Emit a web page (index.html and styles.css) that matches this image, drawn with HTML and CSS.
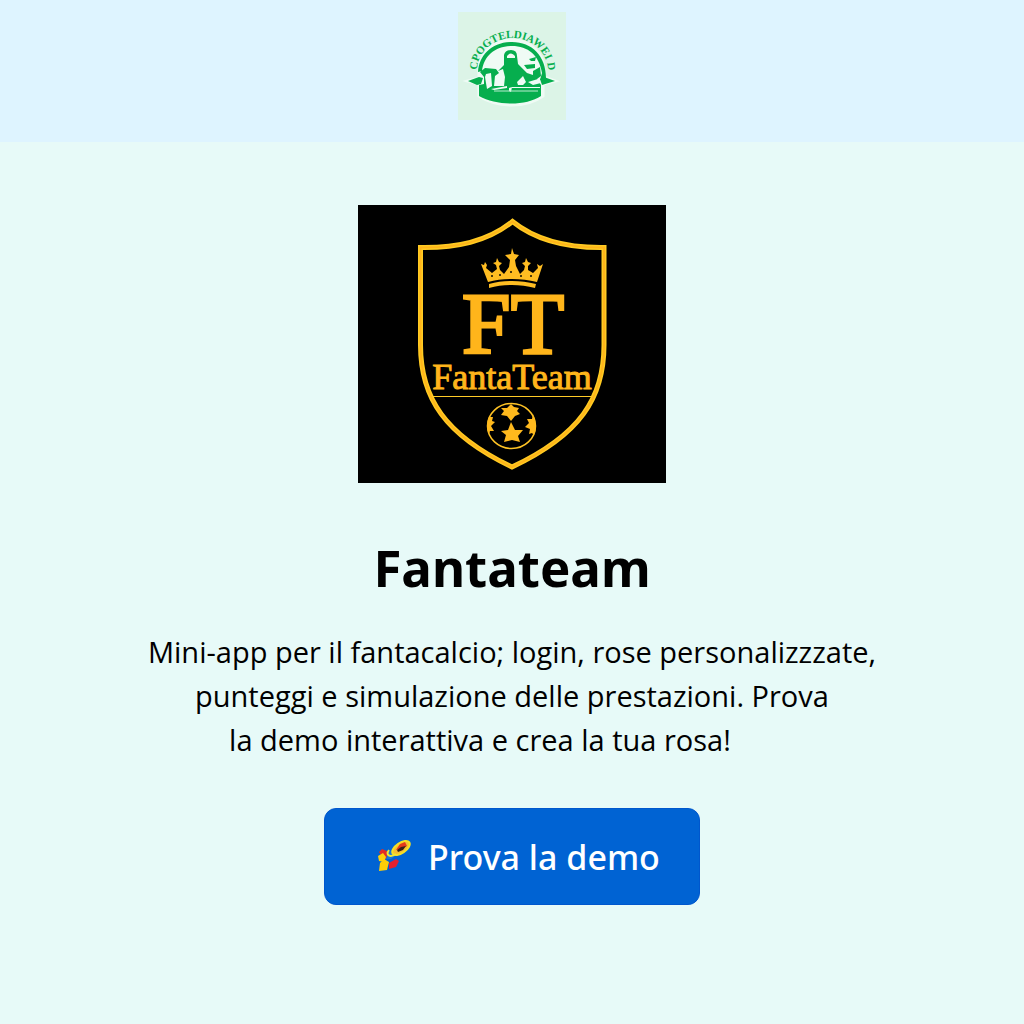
FILE: index.html
```html
<!DOCTYPE html>
<html lang="it">
<head>
<meta charset="utf-8">
<meta name="viewport" content="width=device-width, initial-scale=1">
<title>Fantateam</title>
<link rel="stylesheet" href="styles.css">
</head>
<body>
<header class="site-header">
  <svg class="site-logo" viewBox="0 0 108 108" role="img" aria-label="Logo">
    <rect width="108" height="108" fill="#dcf4e7"/>
    <path d="M54 28C34 28 21 42 21 58V66L10 69L21 72V84C40 96 68 96 85 84V72L97 69L86 65V58C86 42 73 28 54 28Z" fill="#effbf5" stroke="#effbf5" stroke-width="3"/>
    <path id="ring" d="M19 58A35.500 33 0 0 1 90 60" fill="none"/>
    <text class="ring-text"><textPath href="#ring" startOffset="0">CPOGTELDIAWEI D</textPath></text>
    <path d="M54 30C34 30 21 43 20 60L24 59C26 43 38 34 54 34S81 43 84 61L82 68L88 66C88 44 74 30 54 30Z" fill="#06ae4e"/>
    <path d="M10 69L21 65L25 66L23 72L19 73ZM97 69L86 65L82 67L84 73ZM21 73L26 72V65L22 60L27 56L38 57L41 61L37 64L36 74H46L47 65L45 57L40 59L46 53L46 43Q47 38 53 38Q59 38 59 44L60 52L69 61L75 63L75 59L82 55L83 64L79 67L83 73V84C68 94 39 94 21 84Z" fill="#06ae4e"/>
    <path d="M49 44Q53 39 57 44V46H49ZM28 62L33 61L34 74L29 77L27 65ZM33 77L49 74V76L36 78ZM54 75H82V76H54ZM51 76L54 75L53 80L51 79ZM59 70L65 64L68 70L65 73H60ZM70 70L80 67L83 71L75 73Z" fill="#effbf5"/>
    <path d="M71 47L78 45L77 49L73 49ZM66 53L77 52L77 56L69 57Z" fill="#06ae4e"/>
    <path d="M36 79H80" stroke="#b9eccf" fill="none"/>
  </svg>
</header>
<main class="hero">
  <svg class="crest" viewBox="358 205 308 278" role="img" aria-label="FantaTeam">
    <rect x="358" y="205" width="308" height="278" fill="#000"/>
    <path d="M420.500 247.500C456 248 487 242 512.500 221.500C538 242 569 248 604 247.500V345C604 398 580 435 512 467C445 435 420.500 398 420.500 345Z" fill="none" stroke="#ffcb22" stroke-width="5"/>
    <path d="M420.500 247.500C456 248 487 242 512.500 221.500C538 242 569 248 604 247.500V345C604 398 580 435 512 467C445 435 420.500 398 420.500 345Z" fill="none" stroke="#ffb51b" stroke-width="2"/>
    <path d="M481 264L484 265L485 262L487 265L486 268L492 273L497 269L496 265L493 263L496 262L497 258L499 262L502 263L499 266L500 270L504 274L509 267L510 260L505 255L511 254L512 248L514 254L519 255L515 260L516 266L520 274L524 270L525 266L522 263L525 262L526 258L528 262L531 263L528 266L528 270L533 273L538 268L537 264L540 266L543 264L537 282C521 278 503 278 488 282ZM489 284C504 280 520 280 536 284L535 288C520 284 504 284 489 288Z" fill="#ffbd22"/>
    <g fill="#151000"><circle cx="492" cy="276" r="1"/><circle cx="500" cy="275" r="1"/><circle cx="511" cy="272" r="1"/><circle cx="521" cy="276" r="1"/><circle cx="531" cy="276" r="1"/></g>
    <text class="monogram" x="462" y="353">F</text>
    <text class="monogram" x="511" y="353">T</text>
    <text class="crest-name" x="512" y="389">FantaTeam</text>
    <path d="M432 396.500H592" stroke="#ffcb28"/>
    <ellipse cx="511.500" cy="426" rx="24" ry="22.500" fill="none" stroke="#ffc325" stroke-width="1.500"/>
    <path d="M511 404L514 407L519 408L517 411L520 414L515 416L511 421L507 416L501 415L504 411L501 408L507 408ZM511 422L515 430L523 430L518 436L520 442L512 440L504 442L506 435L501 431L508 430ZM489 417L493 417L492 421L495 422L491 426L494 431L490 431L489 434Q485 426 489 417ZM533 414Q538 426 534 435L532 433L529 434L530 429L525 427L529 423L527 419L532 419Z" fill="#ffb91d"/>
  </svg>
  <h1 class="title">Fantateam</h1>
  <p class="intro">
    <span class="line">Mini-app per il fantacalcio; login, rose personalizzzate,</span>
    <span class="line">punteggi e simulazione delle prestazioni. Prova</span>
    <span class="line line-last">la demo interattiva e crea la tua rosa!</span>
  </p>
  <button class="cta" type="button">
    <svg class="cta-icon" viewBox="0 0 36 36" aria-hidden="true">
      <path d="M3 13L6 10L11 12L12 18L8 21Z" fill="#e22b25"/>
      <path d="M2 17L7 14L10 18L8 23L3 22ZM4 24L8 20L13 23L11 31L3 32Z" fill="#ffcf08"/>
      <path d="M13 24L20 20L23 22L20 28L13 30Z" fill="#e5202f"/>
      <path d="M12 13L16 11L22 15L15 20L10 20Z" fill="#1675d8"/>
      <ellipse cx="25" cy="9" rx="10" ry="5" transform="rotate(-34 25 9)" fill="#f5bd32" stroke="#f6df24" stroke-width="2"/>
      <path d="M20 11L24 5L29 3L31 7L25 10Z" fill="#e43a1b"/>
      <path d="M21 11L25 8L30 7L27 11L22 13Z" fill="#372018"/>
      <path d="M13 11C9 16 14 19 20 15" fill="none" stroke="#eee536" stroke-width="2"/>
    </svg>
    <span>Prova la demo</span>
  </button>
</main>
</body>
</html>
```
FILE: styles.css
```css
* {
  box-sizing: border-box;
}

body {
  margin: 0;
  min-height: 100vh;
  background: #e7faf8;
  color: #000;
  font-family: "Open Sans", "Noto Sans", sans-serif;
}

.site-header {
  display: flex;
  justify-content: center;
  padding: 12px 24px 22px;
  background: #def4ff;
}

.site-logo {
  display: block;
  width: 108px;
  height: 108px;
}

.ring-text {
  font: bold 11px "Liberation Serif", serif;
  fill: #06ae4e;
}

.hero {
  display: flex;
  flex-direction: column;
  align-items: center;
  padding: 63px 24px;
}

.crest {
  display: block;
  width: 308px;
  max-width: 100%;
}

.monogram {
  font: 87px "Liberation Serif", serif;
  fill: #ffb51b;
  stroke: #ffb51b;
  stroke-width: 3px;
}

.crest-name {
  font: 36px "Liberation Serif", serif;
  fill: #ffb51b;
  stroke: #ffb51b;
  stroke-width: 1px;
  text-anchor: middle;
}

.title {
  margin: 48px 0 0;
  font-size: 51px;
  line-height: 72px;
  font-weight: 800;
  font-family: "Noto Sans", "Open Sans", sans-serif;
  font-weight: 700;
}

.intro {
  margin: 27px 0 0;
  font-size: 29px;
  line-height: 44px;
  text-align: center;
}

.line {
  display: block;
}

.line-last {
  padding-right: 64px;
}

.cta {
  display: flex;
  align-items: center;
  justify-content: center;
  gap: 16px;
  width: 376px;
  max-width: 100%;
  height: 97px;
  margin-top: 46px;
  padding: 0 0 0 12px;
  border: 1px solid #0057cd;
  border-radius: 12px;
  background: #0063d3;
  color: #fff;
  font-family: "Noto Sans", "Open Sans", sans-serif;
  font-size: 34px;
  font-weight: 500;
  cursor: pointer;
}

.cta-icon {
  width: 36px;
  height: 36px;
}
```
